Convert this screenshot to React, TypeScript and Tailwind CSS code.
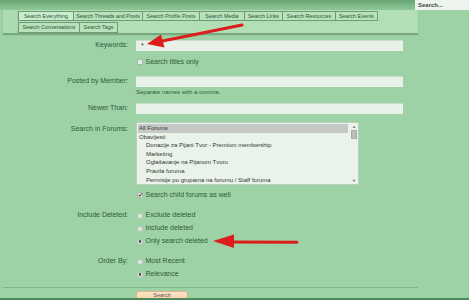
import React from "react";

const Tab = ({ label, w, active }: { label: string; w: string; active?: boolean }) => (
  <div
    className={`${w} h-full border border-[#6f9c76] -ml-px first:ml-0 flex items-center justify-center text-[5.4px] text-[#2e5636] whitespace-nowrap overflow-hidden ${
      active ? "bg-[#c9edcc]" : "bg-[#b8e2bc]"
    }`}
  >
    {label}
  </div>
);

const Label = ({ children }: { children?: React.ReactNode }) => (
  <div className="w-[128px] shrink-0 text-right text-[7px] text-[#2e5b39] whitespace-nowrap">{children}</div>
);

const Input = ({ value }: { value?: string }) => (
  <div className="w-[267px] h-[11px] bg-[#e7f1e8] border-t border-[#c9dccb] text-[7px] text-[#333] pl-[5px] leading-[10px]">
    {value}
  </div>
);

const Checkbox = ({ checked }: { checked?: boolean }) => (
  <div className="w-[6px] h-[6px] bg-[#e6e9e6] border border-[#a9b5aa] rounded-[1px] flex items-center justify-center text-[6px] leading-none text-[#333]">
    {checked ? "✔" : ""}
  </div>
);

const Radio = ({ checked }: { checked?: boolean }) => (
  <div className="w-[6px] h-[6px] rounded-full bg-[#e3e8e3] border border-[#b9c4ba] flex items-center justify-center">
    {checked ? <div className="w-[2.5px] h-[2.5px] rounded-full bg-[#444]" /> : null}
  </div>
);

const Option = ({ children, type, checked, h = "h-[13px]" }: { children: React.ReactNode; type: "c" | "r"; checked?: boolean; h?: string }) => (
  <div className={`flex items-center ${h}`}>
    <div className="w-[136px] shrink-0" />
    <div className="pl-[1px] flex items-center gap-[2.5px] text-[7px] text-[#2e5b39] whitespace-nowrap">
      {type === "c" ? <Checkbox checked={checked} /> : <Radio checked={checked} />}
      <span>{children}</span>
    </div>
  </div>
);

const RadioRow = ({ children, checked }: { children: React.ReactNode; checked?: boolean }) => (
  <div className="flex items-center h-[13px] pl-[9px] gap-[2.5px] text-[7px] text-[#2e5b39] whitespace-nowrap">
    <Radio checked={checked} />
    <span>{children}</span>
  </div>
);

export default function App() {
  const forums: [string, boolean][] = [
    ["All Forums", false],
    ["Obavijesti", false],
    ["Donacije za Pijani Tvor - Premium membership", true],
    ["Marketing", true],
    ["Oglašavanje na Pijanom Tvoru", true],
    ["Pravila foruma", true],
    ["Permisije po grupama na forumu / Staff foruma", true],
  ];
  return (
    <div className="w-[469px] h-[300px] relative overflow-hidden bg-[#9dd2a6] font-['Liberation_Sans',Arial,sans-serif]">
      {/* header */}
      <div className="h-[10px] bg-gradient-to-b from-[#67a574] to-[#8fc899] flex justify-end">
        <div className="w-[54px] h-[10px] bg-[#eef5ee] text-[6px] font-bold text-[#444] pl-[3px] leading-[10px]">Search...</div>
      </div>
      {/* tabs */}
      <div className="ml-[3px] w-[415px] h-[24px] bg-[#b3dfb7] border-b border-[#78a680] shadow-[0_1px_1px_rgba(60,110,70,0.4)] flex">
        <div className="w-[15px] h-full border-r border-[#a3cfa8] bg-[#acdab1]" />
        <div className="flex flex-col pt-[1px]">
          <div className="flex h-[10px]">
            <Tab label="Search Everything" w="w-[56px]" active />
            <Tab label="Search Threads and Posts" w="w-[70px]" />
            <Tab label="Search Profile Posts" w="w-[58px]" />
            <Tab label="Search Media" w="w-[46px]" />
            <Tab label="Search Links" w="w-[39px]" />
            <Tab label="Search Resources" w="w-[54px]" />
            <Tab label="Search Events" w="w-[43px]" />
          </div>
          <div className="flex h-[11px] mt-[1px]">
            <Tab label="Search Conversations" w="w-[62px]" />
            <Tab label="Search Tags" w="w-[39px]" />
          </div>
        </div>
      </div>

      {/* form */}
      <div className="flex items-center gap-[8px] mt-[6px]">
        <Label>Keywords:</Label>
        <Input value="*" />
      </div>
      <div className="mt-[5px]">
        <Option type="c" h="h-[12px]">Search titles only</Option>
      </div>
      <div className="flex items-center gap-[8px] mt-[8px]">
        <Label>Posted by Member:</Label>
        <Input />
      </div>
      <div className="flex items-center h-[9px] mt-[1px]">
        <div className="w-[136px] shrink-0" />
        <div className="text-[6px] text-[#2e5b39]">Separate names with a comma.</div>
      </div>
      <div className="flex items-center gap-[8px] mt-[6px]">
        <Label>Newer Than:</Label>
        <Input />
      </div>
      <div className="flex items-start gap-[8px] mt-[8px]">
        <div className="pt-[2px]">
          <Label>Search in Forums:</Label>
        </div>
        <div className="w-[223px] h-[63px] bg-[#eaf3ea] border border-[#bccfbe] flex pl-[1px] pt-[1px]">
          <div className="flex-1 flex flex-col">
            {forums.map(([f, indent], i) => (
              <div
                key={i}
                className={`h-[8.6px] leading-[8.6px] text-[6px] text-[#333] whitespace-nowrap ${indent ? "pl-[8px]" : "pl-[1px]"} ${
                  i === 0 ? "bg-[#c5c8c5]" : ""
                }`}
              >
                {f}
              </div>
            ))}
          </div>
          <div className="w-[8px] ml-[2px] flex flex-col items-center">
            <div className="h-[6px] text-[4px] leading-[6px] text-[#666]">▲</div>
            <div className="w-[6px] h-[9px] bg-[#bdbdbd] border border-[#a8a8a8]" />
            <div className="flex-1" />
            <div className="h-[6px] text-[4px] leading-[6px] text-[#666]">▼</div>
          </div>
        </div>
      </div>
      <div className="mt-[4px]">
        <Option type="c" checked h="h-[12px]">Search child forums as well</Option>
      </div>

      <div className="flex mt-[8px]">
        <div className="w-[128px] shrink-0 h-[13px] flex items-center justify-end text-[7px] text-[#2e5b39]">Include Deleted:</div>
        <div className="flex flex-col">
          <RadioRow>Exclude deleted</RadioRow>
          <RadioRow>Include deleted</RadioRow>
          <RadioRow checked>Only search deleted</RadioRow>
        </div>
      </div>

      <div className="flex mt-[7px]">
        <div className="w-[128px] shrink-0 h-[13px] flex items-center justify-end text-[7px] text-[#2e5b39]">Order By:</div>
        <div className="flex flex-col">
          <RadioRow>Most Recent</RadioRow>
          <RadioRow checked>Relevance</RadioRow>
        </div>
      </div>

      <div className="ml-[3px] w-[415px] h-px bg-[#80b489] mt-[6px]" />
      <div className="h-[7px] mt-[3px] overflow-hidden pl-[136px]">
        <div className="w-[52px] h-[12px] rounded-t-[3px] bg-gradient-to-b from-[#fde6cc] to-[#f5c796] border border-[#e2b382] text-[5.5px] text-[#555] text-center leading-[7px]">
          Search
        </div>
      </div>
      <div className="h-[3px] bg-[#4c8a5b]" />

      {/* annotation arrows */}
      <svg className="absolute inset-0 pointer-events-none" width="469" height="300" viewBox="0 0 469 300">
        <line x1="242" y1="25" x2="160" y2="41.5" stroke="#dd1c1c" strokeWidth="3" strokeLinecap="round" />
        <polygon points="147,44 161,34.5 164.5,47.5" fill="#dd1c1c" />
        <line x1="230" y1="242" x2="297" y2="242.3" stroke="#dd1c1c" strokeWidth="3" strokeLinecap="round" />
        <polygon points="213,241 234,234.5 234,248" fill="#dd1c1c" />
      </svg>
    </div>
  );
}
